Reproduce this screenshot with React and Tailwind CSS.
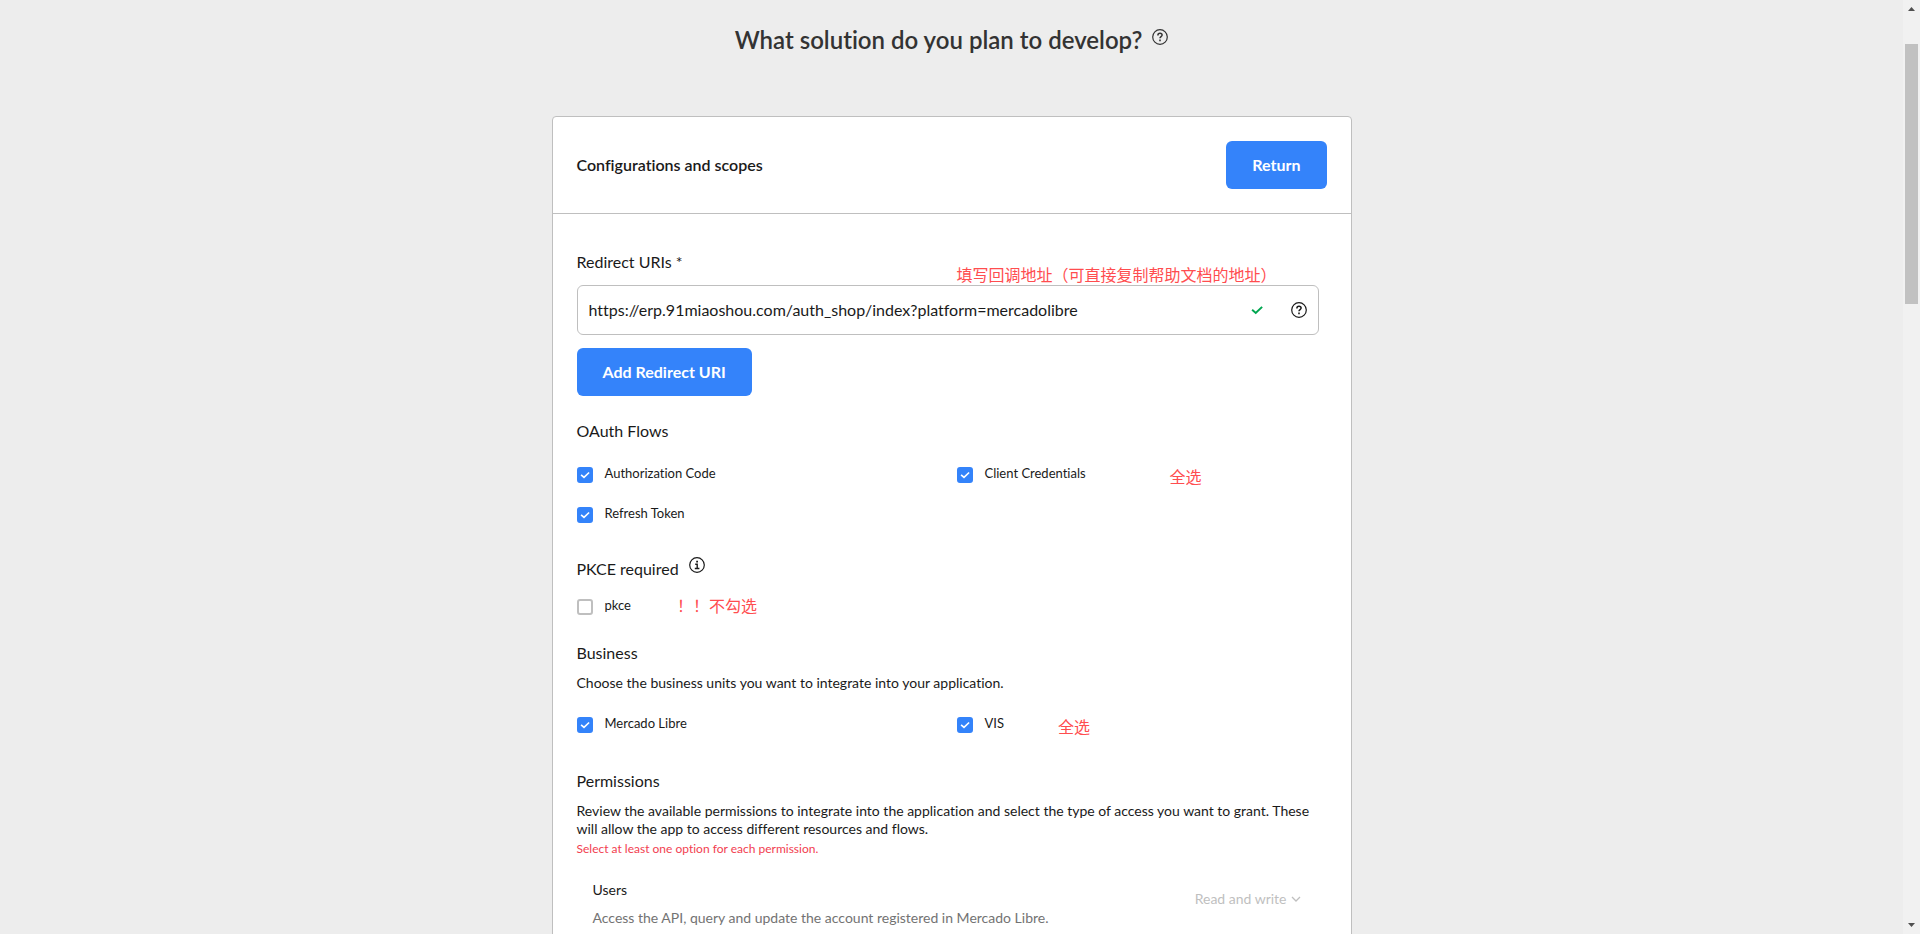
import { useState } from "react";

function HelpIcon({ className }) {
  return (
    <svg className={className} viewBox="0 0 16 16" fill="none" stroke="currentColor" aria-hidden="true">
      <circle cx="8" cy="8" r="7.3" strokeWidth={1.2} />
      <path strokeWidth={1.5} d="M5.9 6.4C5.9 5 6.8 4.3 8 4.3s2.1.7 2.1 1.8c0 1.5-2.1 1.5-2.1 3.2" />
      <path strokeWidth={1.6} d="M8 10.6v1.6" />
    </svg>
  );
}

function InfoIcon({ className }) {
  return (
    <svg className={className} viewBox="0 0 16 16" fill="none" stroke="currentColor" aria-hidden="true">
      <circle cx="8" cy="8" r="7.3" strokeWidth={1.2} />
      <path strokeWidth={1.8} d="M8.1 3.7v1.7" />
      <path strokeWidth={1.4} d="M6.2 7.2h2v4.1M5.8 11.5h4.6" />
    </svg>
  );
}

function CheckIcon({ className }) {
  return (
    <svg className={className} viewBox="0 0 16 16" fill="none" stroke="currentColor" aria-hidden="true">
      <path strokeWidth={1.6} d="M4.1 7.8 7 10.4l5.1-4.9" />
    </svg>
  );
}

function Note({ children, className }) {
  return (
    <span className={`font-['Noto_Sans_CJK_SC',sans-serif] text-base leading-5 text-[#ff4d4f] ${className}`}>
      {children}
    </span>
  );
}

function CheckOption({ id, label, defaultChecked = true }) {
  const [checked, setChecked] = useState(defaultChecked);

  return (
    <label htmlFor={id} className="flex items-start gap-3">
      <span className="relative mt-1 h-4 w-4 shrink-0">
        <input
          id={id}
          type="checkbox"
          checked={checked}
          onChange={(e) => setChecked(e.target.checked)}
          className="block h-4 w-4 appearance-none rounded-[3px] border-2 border-[#bfbfbf] bg-white checked:border-[#3483fa] checked:bg-[#3483fa]"
        />
        {checked && <CheckIcon className="pointer-events-none absolute inset-0 h-4 w-4 text-white" />}
      </span>
      <span className="text-[13px] leading-5">{label}</span>
    </label>
  );
}

function SectionTitle({ children, className }) {
  return <h3 className={`text-base leading-5 font-normal ${className}`}>{children}</h3>;
}

function Permission({ id, title, description }) {
  return (
    <div className="mt-[22px] flex items-start justify-between pr-[26px] pl-4">
      <div>
        <h4 className="text-sm leading-5">{title}</h4>
        <p className="mt-[9px] text-sm leading-[18px] text-[#737373]">{description}</p>
      </div>
      <div className="mt-[9px] flex items-center gap-1 text-[#bfbfbf]">
        <select
          id={id}
          aria-label={title}
          disabled
          className="[field-sizing:content] appearance-none bg-transparent text-sm leading-5 opacity-100"
        >
          <option>Read and write</option>
        </select>
        <svg className="h-2 w-[10px]" viewBox="0 0 10 8" fill="none" stroke="currentColor" aria-hidden="true">
          <path strokeWidth={1.3} d="M1 2l4 4 4-4" />
        </svg>
      </div>
    </div>
  );
}

function Scrollbar() {
  return (
    <div className="flex w-[17px] shrink-0 flex-col items-center bg-[#f1f1f1] py-[7px]" aria-hidden="true">
      <svg className="h-1 w-[7px]" viewBox="0 0 7 4" fill="#505050">
        <path d="M3.5 0 7 4H0z" />
      </svg>
      <div className="mt-[33px] h-[260px] w-[13px] bg-[#c1c1c1]" />
      <svg className="mt-auto h-1 w-[7px]" viewBox="0 0 7 4" fill="#505050">
        <path d="M0 0h7L3.5 4z" />
      </svg>
    </div>
  );
}

export default function App() {
  return (
    <div className="flex h-screen bg-[#ededed] font-['Lato',sans-serif] text-[#1a1a1a] [font-variant-ligatures:no-common-ligatures]">
      <main className="flex-1 overflow-hidden pt-6">
        <div className="flex items-start justify-center gap-[10px] text-[#333333]">
          <h1 className="text-2xl leading-8 font-semibold">What solution do you plan to develop?</h1>
          <HelpIcon className="mt-[5px] h-4 w-4" />
        </div>

        <section className="mx-auto mt-[60px] max-w-[800px] rounded-t border border-[#bfbfbf] bg-white pb-12">
          <header className="flex items-center justify-between border-b border-[#bfbfbf] px-6 py-6">
            <h2 className="text-base font-semibold">Configurations and scopes</h2>
            <button type="button" className="h-12 rounded-md bg-[#3483fa] px-[26px] text-base font-bold text-white">
              Return
            </button>
          </header>

          <form className="px-6 pt-[38px]" onSubmit={(e) => e.preventDefault()}>
            <div className="grid grid-cols-2 gap-x-[10px] pb-px">
              <label htmlFor="redirect-uri" className="text-base leading-5">
                Redirect URIs *
              </label>
              <Note className="mt-3">填写回调地址（可直接复制帮助文档的地址）</Note>
            </div>
            <div className="mr-2 flex h-[50px] items-center rounded-md border border-[#bfbfbf] pr-[11px] pl-[11px]">
              <input
                id="redirect-uri"
                type="text"
                defaultValue="https://erp.91miaoshou.com/auth_shop/index?platform=mercadolibre"
                className="min-w-0 flex-1 bg-transparent text-base outline-none"
              />
              <CheckIcon className="h-5 w-5 text-[#00a650]" />
              <HelpIcon className="ml-6 h-4 w-4" />
            </div>
            <button
              type="button"
              className="mt-[13px] block h-12 rounded-md bg-[#3483fa] px-[26px] text-base font-bold text-white"
            >
              Add Redirect URI
            </button>

            <SectionTitle className="mt-[25px]">OAuth Flows</SectionTitle>
            <div className="mt-[22px] grid grid-cols-2 gap-x-[10px] gap-y-5">
              <CheckOption id="authorization-code" label="Authorization Code" />
              <div className="flex items-start">
                <CheckOption id="client-credentials" label="Client Credentials" />
                <Note className="mt-[3px] -mb-[3px] ml-[84px]">全选</Note>
              </div>
              <CheckOption id="refresh-token" label="Refresh Token" />
            </div>

            <div className="mt-[34px] flex h-[22px] gap-[10px]">
              <SectionTitle className="self-end">PKCE required</SectionTitle>
              <InfoIcon className="h-4 w-4" />
            </div>
            <div className="mt-4 flex items-start">
              <CheckOption id="pkce" label="pkce" defaultChecked={false} />
              <Note className="ml-[46px]">！！不勾选</Note>
            </div>

            <SectionTitle className="mt-7">Business</SectionTitle>
            <p className="mt-[11px] text-sm leading-[18px]">
              Choose the business units you want to integrate into your application.
            </p>
            <div className="mt-[21px] grid grid-cols-2 gap-x-[10px]">
              <CheckOption id="mercado-libre" label="Mercado Libre" />
              <div className="flex items-start">
                <CheckOption id="vis" label="VIS" />
                <Note className="mt-[3px] -mb-[3px] ml-[54px]">全选</Note>
              </div>
            </div>

            <SectionTitle className="mt-[38px]">Permissions</SectionTitle>
            <p className="mt-[11px] text-sm leading-[18px]">
              Review the available permissions to integrate into the application and select the type of access you want
              to grant. These will allow the app to access different resources and flows.
            </p>
            <p className="mt-[2px] text-xs leading-[18px] text-[#f23d4f]">
              Select at least one option for each permission.
            </p>

            <Permission
              id="users-permission"
              title="Users"
              description="Access the API, query and update the account registered in Mercado Libre."
            />
          </form>
        </section>
      </main>
      <Scrollbar />
    </div>
  );
}
